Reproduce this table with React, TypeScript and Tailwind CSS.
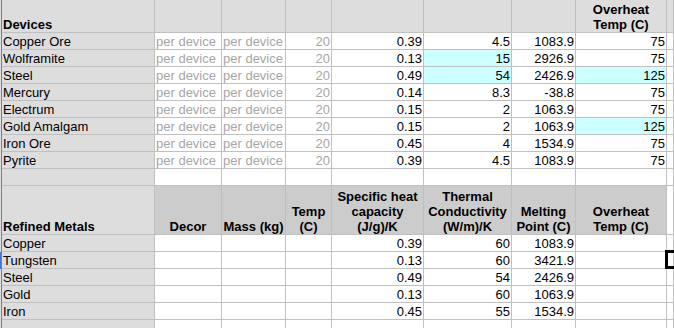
import React from 'react';

const W = ['w-[153px]', 'w-[67px]', 'w-[64px]', 'w-[46px]', 'w-[92px]', 'w-[88px]', 'w-[64px]', 'w-[91px]', 'flex-1'];

type Val = string | { v: string; hi?: boolean };

const devices: [string, Val, Val, Val, Val][] = [
  ['Copper Ore', '0.39', '4.5', '1083.9', '75'],
  ['Wolframite', '0.13', { v: '15', hi: true }, '2926.9', '75'],
  ['Steel', '0.49', { v: '54', hi: true }, '2426.9', { v: '125', hi: true }],
  ['Mercury', '0.14', '8.3', '-38.8', '75'],
  ['Electrum', '0.15', '2', '1063.9', '75'],
  ['Gold Amalgam', '0.15', '2', '1063.9', { v: '125', hi: true }],
  ['Iron Ore', '0.45', '4', '1534.9', '75'],
  ['Pyrite', '0.39', '4.5', '1083.9', '75'],
];

const metals = [
  ['Copper', '0.39', '60', '1083.9'],
  ['Tungsten', '0.13', '60', '3421.9'],
  ['Steel', '0.49', '54', '2426.9'],
  ['Gold', '0.13', '60', '1063.9'],
  ['Iron', '0.45', '55', '1534.9'],
];

const line = 'border-r border-b border-[#c0c0c0]';

function Edge({ blue }: { blue?: boolean }) {
  return <div className={`w-[2px] shrink-0 border-r border-[#808080] ${blue ? 'bg-[#3a78d4]' : 'bg-[#dddddd]'}`} />;
}

function Num({ i, v }: { i: number; v: Val }) {
  const o = typeof v === 'string' ? { v, hi: false } : v;
  return (
    <div className={`${W[i]} shrink-0 ${line} pr-px pt-px text-right ${o.hi ? 'bg-[#ccffff]' : 'bg-white'}`}>{o.v}</div>
  );
}

function Head({ i, children, dark }: { i: number; children?: React.ReactNode; dark?: boolean }) {
  return (
    <div className={`${W[i]} shrink-0 ${line} flex flex-col justify-end text-center font-bold leading-[15px] ${dark ? 'bg-[#cccccc]' : 'bg-[#dddddd]'}`}>
      {children}
    </div>
  );
}

export default function App() {
  return (
    <div className="w-[674px] h-[328px] overflow-hidden bg-white text-[13px] leading-[15px] text-black" style={{ fontFamily: '"Liberation Sans", Arial, sans-serif' }}>
      {/* devices header */}
      <div className="flex h-[33px]">
        <Edge />
        <div className={`${W[0]} shrink-0 ${line} bg-[#dddddd] pl-px flex items-end font-bold`}>Devices</div>
        {[1, 2, 3, 4, 5, 6].map((i) => <Head key={i} i={i} />)}
        <Head i={7}><span>Overheat</span><span>Temp (C)</span></Head>
        <Head i={8} />
      </div>

      {devices.map((d) => (
        <div key={d[0]} className="flex h-[17px]">
          <Edge />
          <div className={`${W[0]} shrink-0 ${line} bg-[#dddddd] pl-px pt-px`}>{d[0]}</div>
          <div className={`${W[1]} shrink-0 ${line} pl-px pt-px text-[#a6a6a6]`}>per device</div>
          <div className={`${W[2]} shrink-0 ${line} pl-px pt-px text-[#a6a6a6]`}>per device</div>
          <div className={`${W[3]} shrink-0 ${line} pr-px pt-px text-right text-[#a6a6a6]`}>20</div>
          <Num i={4} v={d[1]} />
          <Num i={5} v={d[2]} />
          <Num i={6} v={d[3]} />
          <Num i={7} v={d[4]} />
          <div className={`${W[8]} ${line}`} />
        </div>
      ))}

      <div className="flex h-[17px]">
        <Edge />
        <div className={`${W[0]} shrink-0 ${line} bg-[#dddddd]`} />
        {[1, 2, 3, 4, 5, 6, 7].map((i) => <div key={i} className={`${W[i]} shrink-0 ${line}`} />)}
        <div className={`${W[8]} ${line}`} />
      </div>

      {/* refined metals header */}
      <div className="flex h-[49px]">
        <Edge />
        <div className={`${W[0]} shrink-0 ${line} bg-[#dddddd] pl-px flex items-end font-bold`}>Refined Metals</div>
        <Head i={1} dark>Decor</Head>
        <Head i={2} dark>Mass (kg)</Head>
        <Head i={3} dark><span>Temp</span><span>(C)</span></Head>
        <Head i={4} dark><span>Specific heat</span><span>capacity</span><span>(J/g)/K</span></Head>
        <Head i={5} dark><span>Thermal</span><span>Conductivity</span><span>(W/m)/K</span></Head>
        <Head i={6} dark><span>Melting</span><span>Point (C)</span></Head>
        <Head i={7} dark><span>Overheat</span><span>Temp (C)</span></Head>
        <div className={`${W[8]} ${line}`} />
      </div>

      {metals.map((m) => (
        <div key={m[0]} className="flex h-[17px]">
          <Edge blue={m[0] === 'Tungsten'} />
          <div className={`${W[0]} shrink-0 ${line} bg-[#dddddd] pl-px pt-px`}>{m[0]}</div>
          <div className={`${W[1]} shrink-0 ${line}`} />
          <div className={`${W[2]} shrink-0 ${line}`} />
          <div className={`${W[3]} shrink-0 ${line}`} />
          <Num i={4} v={m[1]} />
          <Num i={5} v={m[2]} />
          <Num i={6} v={m[3]} />
          <div className={`${W[7]} shrink-0 ${line}`} />
          <div className={`${W[8]} ${line} relative`}>
            {m[0] === 'Tungsten' && (
              <div className="absolute left-[-2px] top-[-2px] bottom-[-1px] w-[20px] border-[3px] border-black" />
            )}
          </div>
        </div>
      ))}

      <div className="flex h-[17px]">
        <Edge />
        <div className={`${W[0]} shrink-0 ${line} bg-[#dddddd]`} />
        {[1, 2, 3, 4, 5, 6, 7].map((i) => <div key={i} className={`${W[i]} shrink-0 ${line}`} />)}
        <div className={`${W[8]} ${line}`} />
      </div>
    </div>
  );
}
